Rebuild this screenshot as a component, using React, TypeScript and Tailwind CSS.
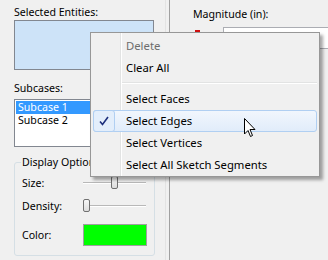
import React from "react";

function Slider({ pos }: { pos: number }) {
  return (
    <div className="relative w-[63px] h-[14px]">
      <div className="absolute left-0 right-0 top-[6px] h-[1px] bg-[#b8b8b8]" />
      <div className="absolute left-0 right-0 top-[7px] h-[1px] bg-[#ffffff]" />
      <div
        className="absolute top-0 w-[7px] h-[13px] rounded-[2px] border border-[#707070] bg-gradient-to-b from-[#f7f7f7] to-[#dcdcdc]"
        style={{ left: pos }}
      />
    </div>
  );
}

function MenuItem({
  label,
  disabled,
  active,
}: {
  label: string;
  disabled?: boolean;
  active?: boolean;
}) {
  return (
    <div className="relative h-[22px] flex items-center">
      {active && (
        <>
          <div className="absolute left-[2px] right-[2px] top-0 bottom-0 rounded-[3px] border border-[#b0cff2] bg-gradient-to-b from-[#f1f6fd] to-[#e1ecfa]" />
          <div className="absolute left-[2px] w-[22px] top-0 bottom-0 rounded-[3px] border border-[#b0cff2] bg-[#e3eefb] flex items-center justify-center">
            <svg width="12" height="12" viewBox="0 0 12 12">
              <path
                d="M2 6.5 L4.5 9.5 L10 2"
                stroke="#1d2f7c"
                strokeWidth="1.6"
                fill="none"
              />
            </svg>
          </div>
        </>
      )}
      <span
        className={`relative pl-[35px] ${disabled ? "text-[#6d6d6d]" : "text-[#000000]"}`}
      >
        {label}
      </span>
    </div>
  );
}

export default function App() {
  return (
    <div
      className="relative w-[328px] h-[260px] overflow-hidden bg-[#f0f0f0] text-[10.6px] leading-[14px] text-black"
      style={{ fontFamily: '"Noto Sans", "Segoe UI", sans-serif' }}
    >
      <div className="flex h-full">
        {/* left panel */}
        <div className="w-[165px] shrink-0 h-full pl-[14px] pt-[5px] flex flex-col">
          <div>Selected Entities:</div>
          <div className="mt-[1px] w-[140px] h-[50px] border border-[#828790] bg-[#cde3f8]" />
          <div className="mt-[11px]">Subcases:</div>
          <div className="mt-[4px] w-[140px] h-[48px] border border-[#828790] bg-white p-[1px]">
            <div className="h-[13px] leading-[13px] bg-[#3399ff] text-white pl-[2px]">
              Subcase 1
            </div>
            <div className="h-[13px] leading-[13px] pl-[2px]">Subcase 2</div>
          </div>
          <div className="relative mt-[15px] w-[141px] h-[94px] rounded-[3px] border border-[#d5dfe5]">
            <div className="absolute left-[6px] top-[-8px] px-[1px] bg-[#f0f0f0]">
              Display Options
            </div>
            <div className="flex flex-col pl-[7px] pt-[13px]">
              <div className="flex items-center h-[14px]">
                <span className="w-[61px]">Size:</span>
                <Slider pos={28} />
              </div>
              <div className="flex items-center h-[14px] mt-[9px]">
                <span className="w-[61px]">Density:</span>
                <Slider pos={0} />
              </div>
              <div className="flex items-center mt-[11px]">
                <span className="w-[61px]">Color:</span>
                <div className="w-[64px] h-[22px] border border-[#a0a0a0] bg-[#00ff00]" />
              </div>
            </div>
          </div>
        </div>
        <div className="w-[4px] shrink-0 h-full border-l border-[#e3e3e3]" />
        <div className="w-[1px] shrink-0 h-full bg-[#a0a0a0]" />
        {/* right panel */}
        <div className="flex-1 min-w-0 overflow-hidden pl-[23px] pt-[7px]">
          <div className="whitespace-nowrap">Magnitude (in):</div>
          <div className="flex items-start mt-[6px]">
            <div className="mt-[3px] ml-[2px] w-[5px] h-[2px] shrink-0 bg-[#d01010]" />
            <div className="ml-[23px] w-[120px] h-[22px] shrink-0 border border-[#abadb3] bg-white" />
          </div>
        </div>
      </div>

      {/* context menu */}
      <div className="absolute left-[90px] top-[32px] w-[230px] h-[145px] border border-[#979797] bg-[#f0f0f0] shadow-[3px_3px_3px_rgba(0,0,0,0.35)] pt-[2px] text-[11.3px]">
        <div className="absolute left-[29px] top-0 bottom-0 w-[1px] bg-[#e2e3e3]" />
        <div className="absolute left-[30px] top-0 bottom-0 w-[1px] bg-white" />
        <MenuItem label="Delete" disabled />
        <MenuItem label="Clear All" />
        <div className="relative h-[9px]">
          <div className="absolute left-[31px] right-[2px] top-[3px] h-[1px] bg-[#e2e3e3]" />
          <div className="absolute left-[31px] right-[2px] top-[4px] h-[1px] bg-white" />
        </div>
        <MenuItem label="Select Faces" />
        <MenuItem label="Select Edges" active />
        <MenuItem label="Select Vertices" />
        <MenuItem label="Select All Sketch Segments" />
      </div>

      {/* cursor */}
      <svg
        className="absolute left-[244px] top-[118px]"
        width="13"
        height="20"
        viewBox="0 0 13 20"
      >
        <path
          d="M0.5 0.5 L0.5 16 L4 12.5 L6.5 18.5 L8.5 17.5 L6 11.5 L11 11.5 Z"
          fill="white"
          stroke="black"
          strokeWidth="1"
          strokeLinejoin="miter"
        />
      </svg>
    </div>
  );
}
